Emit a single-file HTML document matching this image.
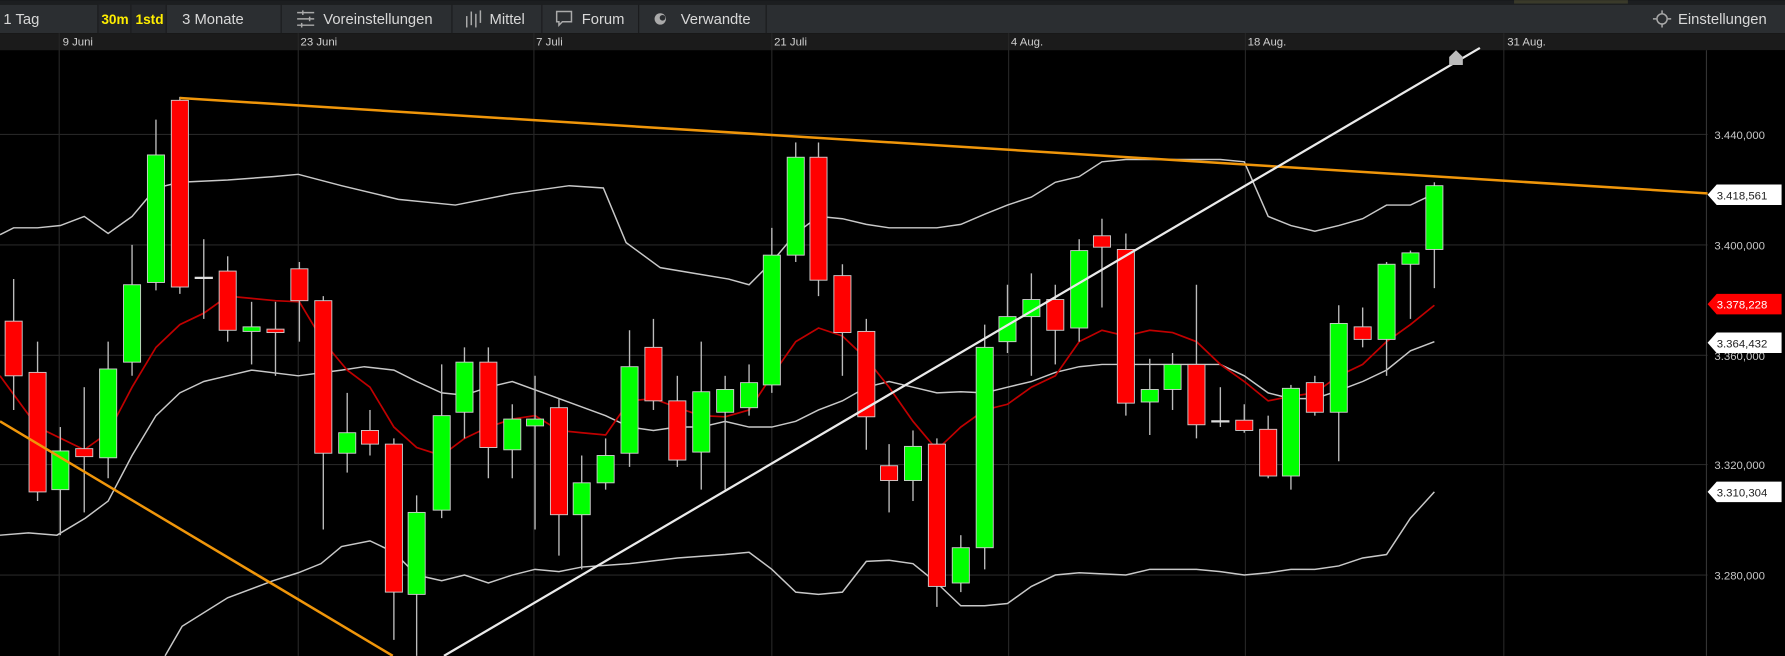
<!DOCTYPE html>
<html><head><meta charset="utf-8"><style>
html,body{margin:0;padding:0;background:#000;width:1785px;height:656px;overflow:hidden}
svg{display:block}
text{font-family:"Liberation Sans",sans-serif}
</style></head><body>
<svg width="1785" height="656" viewBox="0 0 1568 576" xmlns="http://www.w3.org/2000/svg">
<rect x="0" y="0" width="1568" height="576" fill="#000"/>
<!-- top strip -->
<rect x="0" y="0" width="1568" height="4" fill="#1c1e20"/>
<rect x="1330" y="0" width="100" height="3" fill="#3a3a2a"/>
<!-- toolbar -->
<rect x="0" y="4" width="1568" height="25" fill="#2b2e31"/>
<rect x="86" y="4" width="60" height="25" fill="#25272a"/>
<g stroke="#1a1b1d" stroke-width="1">
<line x1="86" y1="4" x2="86" y2="29"/><line x1="115" y1="4" x2="115" y2="29"/><line x1="146" y1="4" x2="146" y2="29"/>
<line x1="247" y1="4" x2="247" y2="29"/><line x1="397" y1="4" x2="397" y2="29"/><line x1="476" y1="4" x2="476" y2="29"/>
<line x1="561" y1="4" x2="561" y2="29"/><line x1="673" y1="4" x2="673" y2="29"/>
</g>
<g font-size="13" fill="#d8d8d8">
<text x="3" y="21">1 Tag</text>
<text x="89" y="21" fill="#ffee00" font-weight="bold" font-size="12">30m</text>
<text x="119" y="21" fill="#ffee00" font-weight="bold" font-size="12">1std</text>
<text x="160" y="21">3 Monate</text>
<text x="284" y="21">Voreinstellungen</text>
<text x="430" y="21">Mittel</text>
<text x="511" y="21">Forum</text>
<text x="598" y="21">Verwandte</text>
<text x="1474" y="21">Einstellungen</text>
</g>
<!-- icons -->
<g stroke="#aaa" stroke-width="1.3" fill="none">
<line x1="261" y1="11" x2="276" y2="11"/><line x1="261" y1="16.5" x2="276" y2="16.5"/><line x1="261" y1="22" x2="276" y2="22"/>
<line x1="266" y1="9" x2="266" y2="13"/><line x1="272" y1="14.5" x2="272" y2="18.5"/><line x1="265" y1="20" x2="265" y2="24"/>
<line x1="410" y1="14" x2="410" y2="24"/><line x1="414" y1="10" x2="414" y2="22"/><line x1="418" y1="12" x2="418" y2="24"/><line x1="422" y1="9" x2="422" y2="20"/>
<path d="M489 10h13v9h-8l-3 3v-3h-2z"/>
<circle cx="1460" cy="16.5" r="4.5"/>
<path d="M1452 16.5h3M1465 16.5h3M1460 9v3M1460 21v3"/>
</g>
<circle cx="580" cy="16.5" r="5" fill="#aaa"/><circle cx="582" cy="15.5" r="2.5" fill="#2b2e31"/>
<!-- date row -->
<rect x="0" y="29" width="1568" height="15" fill="#1b1b1b"/>
<g font-size="10" fill="#d0d0d0">
<text x="55" y="40">9 Juni</text><text x="264" y="40">23 Juni</text><text x="471" y="40">7 Juli</text>
<text x="680" y="40">21 Juli</text><text x="888" y="40">4 Aug.</text><text x="1096" y="40">18 Aug.</text><text x="1324" y="40">31 Aug.</text>
</g>
<!-- grid -->
<g stroke="#262626" stroke-width="1">
<line x1="52" y1="29" x2="52" y2="576"/><line x1="262" y1="29" x2="262" y2="576"/><line x1="469" y1="29" x2="469" y2="576"/>
<line x1="678" y1="29" x2="678" y2="576"/><line x1="886" y1="29" x2="886" y2="576"/><line x1="1094" y1="29" x2="1094" y2="576"/>
<line x1="1321" y1="29" x2="1321" y2="576"/>
<line x1="0" y1="118" x2="1568" y2="118"/><line x1="0" y1="215" x2="1568" y2="215"/><line x1="0" y1="312" x2="1568" y2="312"/>
<line x1="0" y1="408" x2="1568" y2="408"/><line x1="0" y1="505" x2="1568" y2="505"/>
</g>
<line x1="1499" y1="44" x2="1499" y2="576" stroke="#333"/>
<!-- bands -->
<g fill="none" stroke="#c8c8c8" stroke-width="1.3">
<polyline points="0,206 12,200 33,200 53,198 74,190 95,205 116,190 137,165 158,160 200,158 240,155 262,153 300,163 350,175 400,180 450,170 500,163 530,165 550,213 580,235 610,240 640,245 658,250 678,230 699,205 719,190 740,192 761,197 781,200 823,200 844,197 865,188 885,180 906,173 927,160 948,155 968,142 989,140 1072,140 1093,142 1114,190 1134,198 1155,203 1176,198 1197,192 1218,180 1239,180 1260,170"/>
<polyline points="0,470 25,468 50,470 75,455 95,440 116,400 137,365 158,345 179,335 200,330 221,325 262,330 300,325 320,322 346,325 366,335 388,345 408,347 429,340 450,335 491,350 532,365 553,375 574,378 595,375 616,375 637,370 658,375 678,375 699,370 719,360 740,352 761,340 781,335 802,340 823,345 844,344 865,345 885,340 906,335 927,327 948,322 968,320 1072,320 1093,330 1114,345 1134,350 1155,350 1176,343 1197,335 1218,325 1239,308 1260,300"/>
<polyline points="145,576 160,550 200,525 240,510 262,503 282,495 300,480 325,475 346,485 366,505 388,510 408,505 429,512 450,505 470,500 491,502 511,498 553,495 595,490 637,487 658,485 678,500 699,520 719,522 740,520 761,493 781,492 802,495 823,512 844,532 865,532 885,530 906,515 927,505 948,503 989,505 1010,500 1051,500 1072,502 1093,505 1114,503 1134,500 1155,500 1176,497 1197,490 1218,487 1239,455 1260,432"/>
</g>
<polyline fill="none" stroke="#c00000" stroke-width="1.5" points="0,330 33,375 74,395 95,380 116,340 137,305 158,285 179,275 200,260 221,262 242,264 263,265 284,300 305,325 325,340 346,375 366,393 388,400 408,385 429,375 450,368 470,365 491,378 511,380 532,382 553,352 574,350 595,358 616,365 637,366 658,360 678,330 699,300 719,288 740,295 761,315 781,340 802,370 823,395 844,375 865,360 885,355 906,340 927,330 948,300 968,290 989,295 1010,290 1030,292 1051,300 1072,320 1093,335 1114,352 1134,348 1155,345 1176,330 1197,320 1218,300 1239,285 1260,268"/>
<!-- wicks -->
<g stroke="#bbb" stroke-width="1.2">
<line x1="12" y1="245" x2="12" y2="360"/><line x1="33" y1="300" x2="33" y2="440"/><line x1="53" y1="375" x2="53" y2="470"/><line x1="74" y1="340" x2="74" y2="450"/><line x1="95" y1="300" x2="95" y2="420"/><line x1="116" y1="215" x2="116" y2="330"/><line x1="137" y1="105" x2="137" y2="255"/><line x1="158" y1="85" x2="158" y2="258"/><line x1="179" y1="210" x2="179" y2="280"/><line x1="200" y1="225" x2="200" y2="300"/><line x1="221" y1="265" x2="221" y2="320"/><line x1="242" y1="265" x2="242" y2="330"/><line x1="263" y1="230" x2="263" y2="300"/><line x1="284" y1="260" x2="284" y2="465"/><line x1="305" y1="345" x2="305" y2="415"/><line x1="325" y1="360" x2="325" y2="400"/><line x1="346" y1="385" x2="346" y2="562"/><line x1="366" y1="435" x2="366" y2="576"/><line x1="388" y1="320" x2="388" y2="455"/><line x1="408" y1="305" x2="408" y2="385"/><line x1="429" y1="305" x2="429" y2="420"/><line x1="450" y1="355" x2="450" y2="420"/><line x1="470" y1="330" x2="470" y2="465"/><line x1="491" y1="350" x2="491" y2="488"/><line x1="511" y1="400" x2="511" y2="500"/><line x1="532" y1="385" x2="532" y2="430"/><line x1="553" y1="290" x2="553" y2="410"/><line x1="574" y1="280" x2="574" y2="360"/><line x1="595" y1="330" x2="595" y2="410"/><line x1="616" y1="300" x2="616" y2="430"/><line x1="637" y1="330" x2="637" y2="430"/><line x1="658" y1="320" x2="658" y2="365"/><line x1="678" y1="200" x2="678" y2="345"/><line x1="699" y1="125" x2="699" y2="230"/><line x1="719" y1="125" x2="719" y2="260"/><line x1="740" y1="232" x2="740" y2="330"/><line x1="761" y1="280" x2="761" y2="395"/><line x1="781" y1="390" x2="781" y2="450"/><line x1="802" y1="378" x2="802" y2="440"/><line x1="823" y1="385" x2="823" y2="533"/><line x1="844" y1="470" x2="844" y2="520"/><line x1="865" y1="285" x2="865" y2="500"/><line x1="885" y1="250" x2="885" y2="310"/><line x1="906" y1="240" x2="906" y2="330"/><line x1="927" y1="250" x2="927" y2="320"/><line x1="948" y1="210" x2="948" y2="300"/><line x1="968" y1="192" x2="968" y2="270"/><line x1="989" y1="205" x2="989" y2="365"/><line x1="1010" y1="315" x2="1010" y2="382"/><line x1="1030" y1="310" x2="1030" y2="360"/><line x1="1051" y1="250" x2="1051" y2="385"/><line x1="1072" y1="340" x2="1072" y2="375"/><line x1="1093" y1="355" x2="1093" y2="380"/><line x1="1114" y1="365" x2="1114" y2="420"/><line x1="1134" y1="338" x2="1134" y2="430"/><line x1="1155" y1="330" x2="1155" y2="365"/><line x1="1176" y1="268" x2="1176" y2="405"/><line x1="1197" y1="270" x2="1197" y2="305"/><line x1="1218" y1="230" x2="1218" y2="330"/><line x1="1239" y1="220" x2="1239" y2="280"/><line x1="1260" y1="160" x2="1260" y2="253"/>
</g>
<!-- bodies -->
<g stroke="#cfcfcf" stroke-width="0.8">
<g fill="#ff0000">
<rect x="4.5" y="282" width="15" height="48"/><rect x="25.5" y="327" width="15" height="105"/><rect x="66.5" y="394" width="15" height="7"/><rect x="150.5" y="88" width="15" height="164"/><rect x="192.5" y="238" width="15" height="52"/><rect x="234.5" y="289" width="15" height="3"/><rect x="255.5" y="236" width="15" height="28"/><rect x="276.5" y="264" width="15" height="134"/><rect x="317.5" y="378" width="15" height="12"/><rect x="338.5" y="390" width="15" height="130"/><rect x="421.5" y="318" width="15" height="75"/><rect x="483.5" y="358" width="15" height="94"/><rect x="566.5" y="305" width="15" height="47"/><rect x="587.5" y="352" width="15" height="52"/><rect x="711.5" y="138" width="15" height="108"/><rect x="732.5" y="242" width="15" height="50"/><rect x="753.5" y="291" width="15" height="75"/><rect x="773.5" y="409" width="15" height="13"/><rect x="815.5" y="390" width="15" height="125"/><rect x="919.5" y="263" width="15" height="27"/><rect x="960.5" y="207" width="15" height="10"/><rect x="981.5" y="219" width="15" height="135"/><rect x="1043.5" y="320" width="15" height="53"/><rect x="1085.5" y="369" width="15" height="9"/><rect x="1106.5" y="377" width="15" height="41"/><rect x="1147.5" y="336" width="15" height="26"/><rect x="1189.5" y="287" width="15" height="11"/>
</g>
<g fill="#00ff00">
<rect x="45.5" y="396" width="15" height="34"/><rect x="87.5" y="324" width="15" height="78"/><rect x="108.5" y="250" width="15" height="68"/><rect x="129.5" y="136" width="15" height="112"/><rect x="213.5" y="287" width="15" height="4"/><rect x="297.5" y="380" width="15" height="18"/><rect x="358.5" y="450" width="15" height="72"/><rect x="380.5" y="365" width="15" height="83"/><rect x="400.5" y="318" width="15" height="44"/><rect x="442.5" y="368" width="15" height="27"/><rect x="462.5" y="368" width="15" height="6"/><rect x="503.5" y="424" width="15" height="28"/><rect x="524.5" y="400" width="15" height="24"/><rect x="545.5" y="322" width="15" height="76"/><rect x="608.5" y="344" width="15" height="53"/><rect x="629.5" y="342" width="15" height="20"/><rect x="650.5" y="336" width="15" height="22"/><rect x="670.5" y="224" width="15" height="114"/><rect x="691.5" y="138" width="15" height="86"/><rect x="794.5" y="392" width="15" height="30"/><rect x="836.5" y="481" width="15" height="31"/><rect x="857.5" y="305" width="15" height="176"/><rect x="877.5" y="278" width="15" height="22"/><rect x="898.5" y="263" width="15" height="15"/><rect x="940.5" y="220" width="15" height="68"/><rect x="1002.5" y="342" width="15" height="11"/><rect x="1022.5" y="320" width="15" height="22"/><rect x="1126.5" y="341" width="15" height="77"/><rect x="1168.5" y="284" width="15" height="78"/><rect x="1210.5" y="232" width="15" height="66"/><rect x="1231.5" y="222" width="15" height="10"/><rect x="1252.5" y="163" width="15" height="56"/>
</g>
</g>
<g stroke="#ddd" stroke-width="2"><line x1="171" y1="244" x2="187" y2="244"/><line x1="1064" y1="370" x2="1080" y2="370"/></g>
<!-- trend lines -->
<line x1="158" y1="86" x2="1568" y2="174" stroke="#f0960a" stroke-width="2.2"/>
<line x1="0" y1="370" x2="345" y2="576" stroke="#f0960a" stroke-width="2.2"/>
<line x1="390" y1="576" x2="1300" y2="42" stroke="#eaeaea" stroke-width="2"/>
<path d="M1273 57v-7l6-6 6 6v7z" fill="#bbb"/>
<!-- axis -->
<rect x="1500" y="44" width="68" height="532" fill="#000"/>
<g font-size="10" fill="#c8c8c8">
<text x="1506" y="122">3.440,000</text><text x="1506" y="219">3.400,000</text><text x="1506" y="316">3.360,000</text>
<text x="1506" y="412">3.320,000</text><text x="1506" y="509">3.280,000</text>
</g>
<g font-size="10">
<path d="M1500 171l8-9h57v18h-57z" fill="#fff"/><text x="1508" y="175" fill="#222">3.418,561</text>
<path d="M1500 267l8-9h57v18h-57z" fill="#f00"/><text x="1508" y="271" fill="#fff">3.378,228</text>
<path d="M1500 301l8-9h57v18h-57z" fill="#fff"/><text x="1508" y="305" fill="#222">3.364,432</text>
<path d="M1500 432l8-9h57v18h-57z" fill="#fff"/><text x="1508" y="436" fill="#222">3.310,304</text>
</g>
</svg>
</body></html>
